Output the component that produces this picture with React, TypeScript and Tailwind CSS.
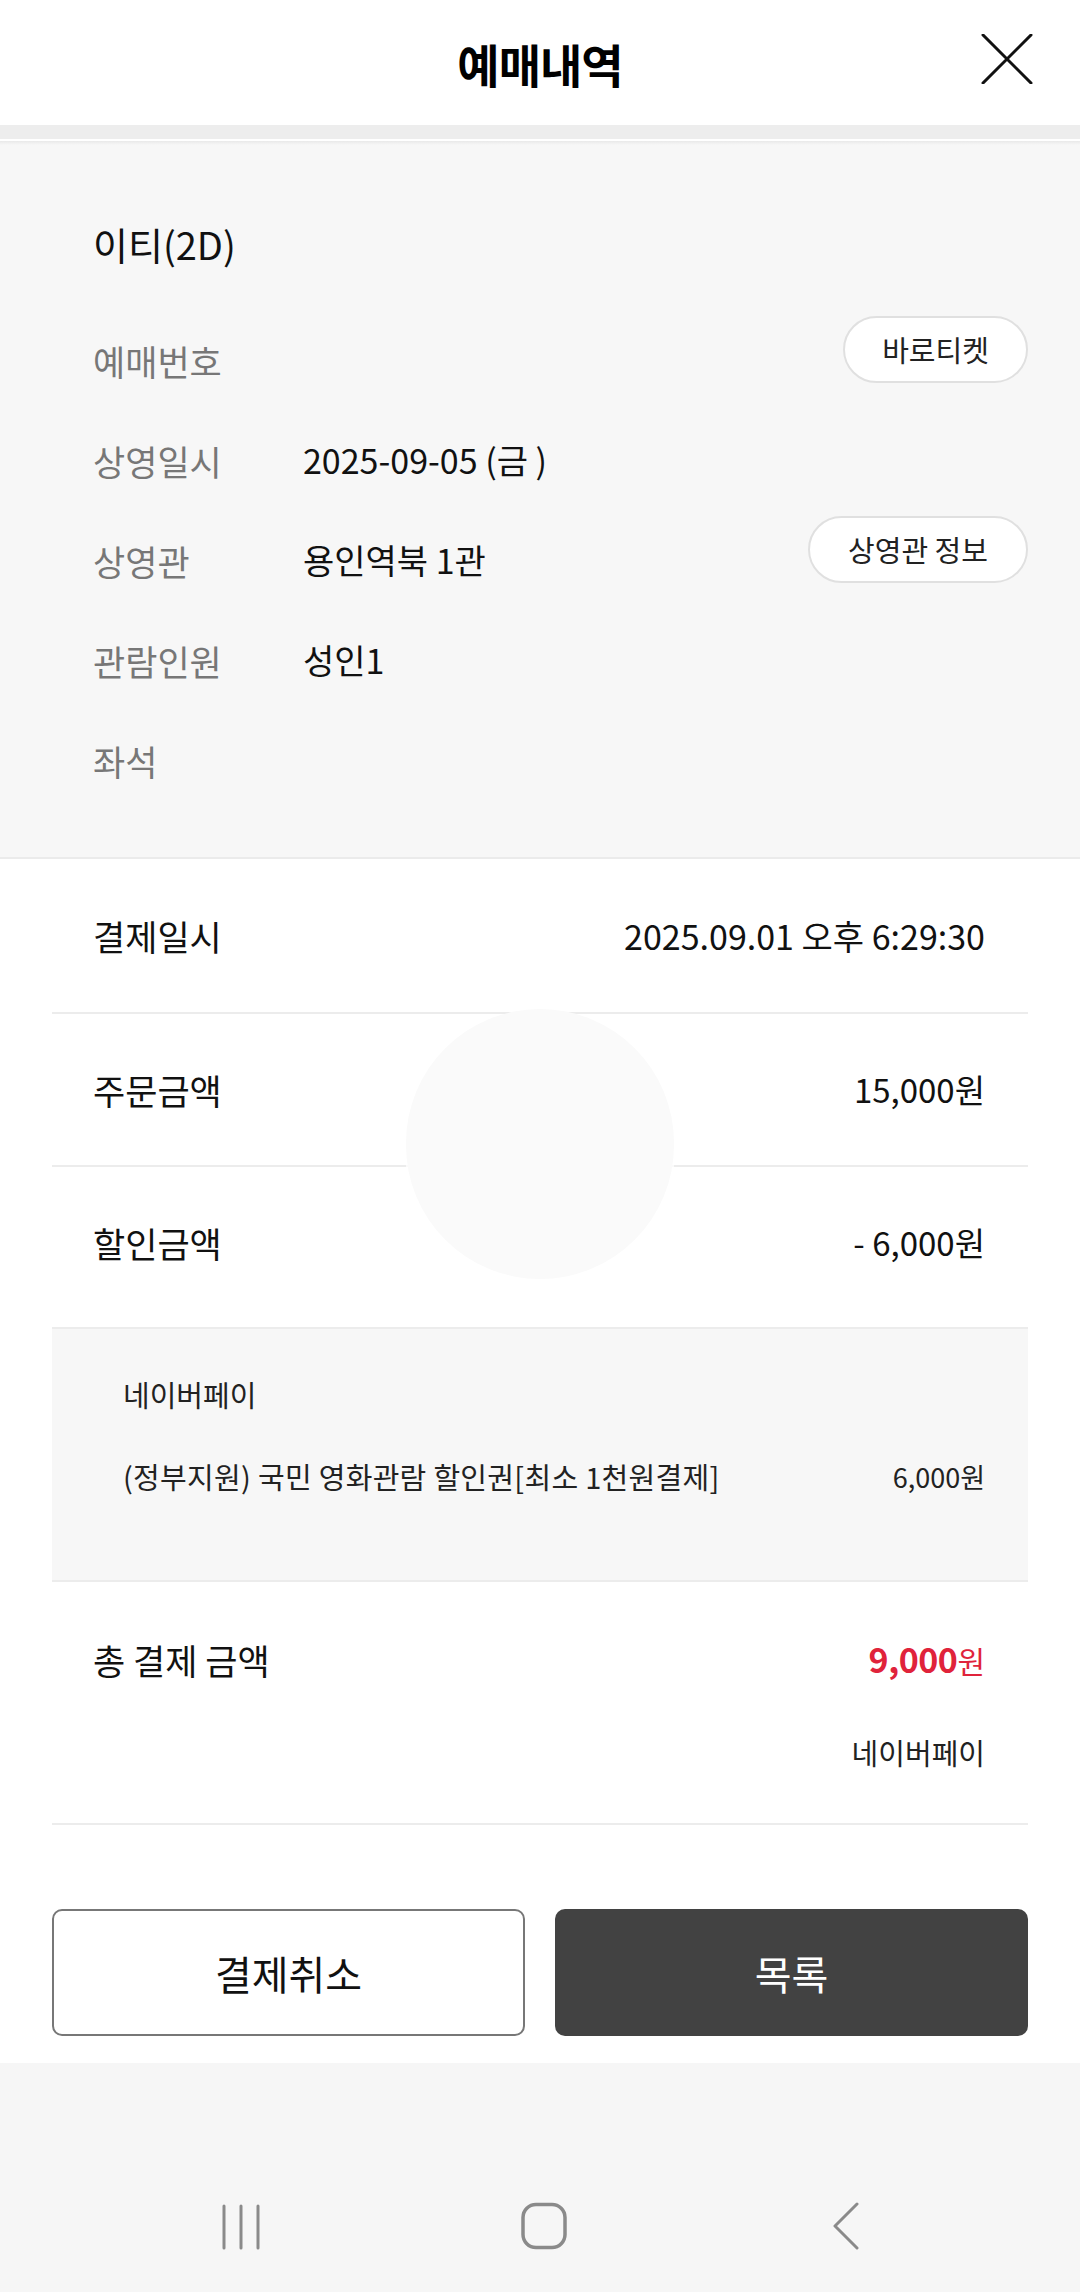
export default function App() {
  const label = "text-[35px] leading-none text-[#777] w-[210px] shrink-0";
  const value = "text-[34px] leading-none text-[#111]";
  return (
    <div className="w-[1080px] h-[2292px] bg-[#f6f6f6] flex flex-col font-['Noto_Sans_CJK_KR','Noto_Sans',sans-serif] text-[#111]">
      {/* Header */}
      <header className="h-[125px] shrink-0 bg-white grid grid-cols-[1fr_auto_1fr] items-center">
        <div />
        <h1 className="text-[46px] font-bold leading-none tracking-[-1px] text-black">예매내역</h1>
        <div className="flex justify-end pr-[47px] pb-[8px]">
          <svg width="52" height="50" viewBox="0 0 52 50" fill="none">
            <path d="M2 1 L50 49 M50 1 L2 49" stroke="#111" strokeWidth="3" strokeLinecap="round" />
          </svg>
        </div>
      </header>
      <div className="h-[14px] shrink-0 bg-[#ededed]" />
      <div className="h-[2px] shrink-0 bg-white" />

      {/* Booking info */}
      <section className="shrink-0 bg-[#f7f7f7] border-b-2 border-[#ebebeb] flex flex-col">
        <div className="h-[4px] bg-gradient-to-b from-[#e9e9e9] to-[#f7f7f7]" />
        <div className="pt-[49px] pl-[93px] pr-[52px] pb-[47px] flex flex-col">
          <div className="h-[100px] flex items-center">
            <span className="text-[38px] leading-none text-[#111]">이티(2D)</span>
          </div>
          <div className="mt-[16px] flex flex-col">
            <div className="h-[100px] flex items-center">
              <span className={label}>예매번호</span>
              <span className="flex-1" />
              <button className="mb-[22px] h-[67px] w-[185px] rounded-full border-2 border-[#e0e0e0] bg-white text-[29px] leading-none text-[#222] flex items-center justify-center">
                바로티켓
              </button>
            </div>
            <div className="h-[100px] flex items-center">
              <span className={label}>상영일시</span>
              <span className={value}>2025-09-05 (금 )</span>
            </div>
            <div className="h-[100px] flex items-center">
              <span className={label}>상영관</span>
              <span className={value}>용인역북 1관</span>
              <span className="flex-1" />
              <button className="mb-[22px] h-[67px] w-[220px] rounded-full border-2 border-[#e0e0e0] bg-white text-[29px] leading-none text-[#222] flex items-center justify-center">
                상영관 정보
              </button>
            </div>
            <div className="h-[100px] flex items-center">
              <span className={label}>관람인원</span>
              <span className={value}>성인1</span>
            </div>
            <div className="h-[100px] flex items-center">
              <span className={label}>좌석</span>
            </div>
          </div>
        </div>
      </section>

      {/* Payment */}
      <section className="shrink-0 bg-white px-[52px] flex flex-col relative">
        <div className="absolute left-[406px] top-[150px] w-[268px] h-[270px] rounded-full bg-[#fafafa]" />
        <div className="h-[153px] flex items-center justify-between pl-[41px] pr-[43px]">
          <span className="text-[35px] leading-none">결제일시</span>
          <span className="text-[34px] leading-none">2025.09.01 오후 6:29:30</span>
        </div>
        <div className="h-[2px] bg-[#ececec]" />
        <div className="h-[151px] flex items-center justify-between pl-[41px] pr-[43px] relative">
          <span className="text-[35px] leading-none">주문금액</span>
          <span className="text-[33px] leading-none">15,000원</span>
        </div>
        <div className="h-[2px] bg-[#ececec] flex">
          <div className="w-[354px] bg-[#ececec]" />
          <div className="w-[268px] bg-[#fafafa]" />
          <div className="flex-1 bg-[#ececec]" />
        </div>
        <div className="h-[160px] pb-[10px] flex items-center justify-between pl-[41px] pr-[43px] relative">
          <span className="text-[35px] leading-none">할인금액</span>
          <span className="text-[33px] leading-none">- 6,000원</span>
        </div>
        <div className="h-[255px] border-y-2 border-[#ececec] bg-[#f7f7f7] pl-[71px] pr-[43px] pt-[40px] flex flex-col">
          <div className="h-[50px] flex items-center">
            <span className="text-[29px] leading-none text-[#222]">네이버페이</span>
          </div>
          <div className="mt-[32px] h-[50px] flex items-center justify-between">
            <span className="text-[29px] leading-none text-[#222] tracking-[0.3px]">(정부지원) 국민 영화관람 할인권[최소 1천원결제]</span>
            <span className="text-[27px] leading-none text-[#222]">6,000원</span>
          </div>
        </div>
        <div className="mt-[52px] h-[50px] flex items-center justify-between pl-[41px] pr-[43px]">
          <span className="text-[35px] leading-none">총 결제 금액</span>
          <span className="leading-none text-[#e0233b]">
            <span className="text-[34px] font-bold tracking-[-0.5px]">9,000</span>
            <span className="text-[30px]">원</span>
          </span>
        </div>
        <div className="mt-[48px] h-[40px] flex items-center justify-end pr-[43px]">
          <span className="text-[29px] leading-none text-[#222]">네이버페이</span>
        </div>
        <div className="mt-[51px] h-[2px] bg-[#ececec]" />
        <div className="mt-[84px] mb-[27px] grid grid-cols-2 gap-[30px]">
          <button className="h-[127px] rounded-[10px] border-2 border-[#777] bg-white text-[40px] leading-none text-[#111] flex items-center justify-center">
            결제취소
          </button>
          <button className="h-[127px] rounded-[10px] bg-[#424242] text-[40px] leading-none text-white flex items-center justify-center">
            목록
          </button>
        </div>
      </section>

      {/* Nav bar */}
      <nav className="flex-1 bg-[#f6f6f6] flex items-end justify-center pb-[42px] pl-[8px]">
        <div className="w-[302px] flex justify-center">
          <svg width="44" height="46" viewBox="0 0 44 46" fill="none">
            <path d="M4 2 V44 M21 2 V44 M38 2 V44" stroke="#8a8a8a" strokeWidth="3" strokeLinecap="round" />
          </svg>
        </div>
        <div className="w-[302px] flex justify-center">
          <svg width="48" height="48" viewBox="0 0 48 48" fill="none">
            <rect x="3" y="2.5" width="42" height="43" rx="13" stroke="#8a8a8a" strokeWidth="3.5" />
          </svg>
        </div>
        <div className="w-[302px] flex justify-center">
          <svg width="28" height="48" viewBox="0 0 28 48" fill="none">
            <path d="M25 2 L3 24 L25 46" stroke="#8a8a8a" strokeWidth="3" strokeLinecap="round" strokeLinejoin="round" />
          </svg>
        </div>
      </nav>
    </div>
  );
}
